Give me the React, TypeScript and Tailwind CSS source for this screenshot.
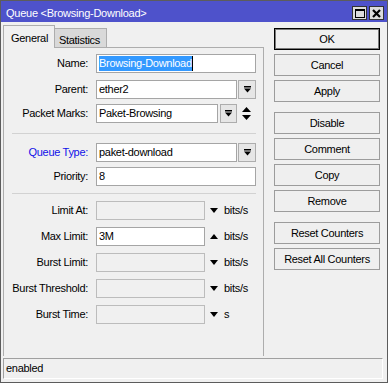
import type { ReactNode } from "react"

function DropIcon() {
  return (
    <svg width="7" height="7" viewBox="0 0 7 7">
      <rect x="0" y="0" width="7" height="1.5" fill="#000" />
      <polygon points="0,2.5 7,2.5 3.5,6.5" fill="#000" />
    </svg>
  )
}

function DropBtn({ className }: { className: string }) {
  return (
    <div className={`flex h-[19px] items-center justify-center border border-[#adadad] bg-[#e6e6e6] ${className}`}>
      <DropIcon />
    </div>
  )
}

function Tri({ up }: { up?: boolean }) {
  return (
    <svg width="8" height="5" viewBox="0 0 8 5" className="ml-[5px]">
      <polygon points={up ? "0,5 8,5 4,0" : "0,0 8,0 4,5"} fill="#000" />
    </svg>
  )
}

function Row({ label, blue, mt, children }: { label: string; blue?: boolean; mt: string; children: ReactNode }) {
  return (
    <div className={`flex h-[19px] items-center ${mt}`}>
      <div className={`w-[84px] text-right ${blue ? "text-[#1010e8]" : "text-black"}`}>{label}</div>
      <div className="ml-[8px] flex h-full items-center">{children}</div>
    </div>
  )
}

function Field({ w, value, off }: { w: string; value?: ReactNode; off?: boolean }) {
  return (
    <div
      className={`flex h-[19px] items-center pl-[2px] ${w} border ${
        off ? "border-[#bcbcbc] bg-[#f0f0f0]" : "border-[#a5a5a5] bg-white"
      }`}
    >
      {value}
    </div>
  )
}

function Limit({ label, mt, value, up, unit = "bits/s" }: { label: string; mt: string; value?: string; up?: boolean; unit?: string }) {
  return (
    <Row label={label} mt={mt}>
      <Field w="w-[109px]" value={value} off={!value} />
      <Tri up={up} />
      <span className="ml-[6px]">{unit}</span>
    </Row>
  )
}

function Btn({ label, mt, primary }: { label: string; mt: string; primary?: boolean }) {
  return (
    <div
      className={`flex h-[22px] w-[106px] items-center justify-center bg-[#efefef] ${mt} ${
        primary ? "border border-black shadow-[inset_0_0_0_1px_#7a7a7a]" : "border border-[#9c9c9c]"
      }`}
    >
      {label}
    </div>
  )
}

export default function App() {
  return (
    <div className="flex h-[383px] w-[388px] flex-col border border-[#5c5c5c] bg-[#f0f0f0] font-['Liberation_Sans',Arial,sans-serif] text-[11px] tracking-[-0.3px] text-black">
      {/* title bar */}
      <div className="flex h-[21px] shrink-0 items-start bg-[#4e52cb] pr-[3px]">
        <span className="pl-[5px] pt-[4px] text-white tracking-[-0.25px]">Queue &lt;Browsing-Download&gt;</span>
        <div className="ml-auto mt-[5px] flex gap-[2px]">
          <div className="flex h-[14px] w-[15px] items-center justify-center border border-[#333] bg-[#dcdcdc]">
            <div className="h-[9px] w-[10px] border border-t-2 border-black" />
          </div>
          <div className="flex h-[14px] w-[15px] items-center justify-center border border-[#333] bg-[#dcdcdc]">
            <svg width="9" height="9" viewBox="0 0 9 9">
              <path d="M1 1 L8 8 M8 1 L1 8" stroke="#000" strokeWidth="2.2" />
            </svg>
          </div>
        </div>
      </div>

      <div className="flex h-[334px] shrink-0">
        {/* left: tabs + form */}
        <div className="ml-[2px] flex w-[261px] flex-col">
          <div className="mt-[3px] flex h-[22px] items-end">
            <div className="relative z-10 -mb-px flex h-[23px] w-[52px] items-start border-x border-t border-[#adadad] bg-[#f0f0f0] pl-[7px] pt-[4px]">
              General
            </div>
            <div className="flex h-[19px] w-[52px] items-start border-r border-t border-[#adadad] bg-[#d9d9d9] pl-[4px] pt-[3px]">
              Statistics
            </div>
          </div>
          <div className="flex flex-1 flex-col border-x border-t border-[#adadad]">
            <Row label="Name:" mt="mt-[6px]">
              <Field
                w="w-[160px]"
                value={
                  <span className="flex items-center">
                    <span className="bg-[#3399ff] leading-[15px] text-white">Browsing-Download</span>
                    <span className="h-[15px] w-px bg-black" />
                  </span>
                }
              />
            </Row>
            <Row label="Parent:" mt="mt-[7px]">
              <Field w="w-[141px]" value="ether2" />
              <DropBtn className="ml-[1px] w-[18px]" />
            </Row>
            <Row label="Packet Marks:" mt="mt-[5px]">
              <Field w="w-[122px]" value="Paket-Browsing" />
              <DropBtn className="ml-[2px] w-[17px]" />
              <svg width="9" height="13" viewBox="0 0 9 13" className="ml-[5px]">
                <polygon points="0,5 9,5 4.5,0" fill="#000" />
                <polygon points="0,8 9,8 4.5,13" fill="#000" />
              </svg>
            </Row>

            <div className="ml-[8px] mt-[10px] h-px w-[244px] bg-[#d2d2d2]" />

            <Row label="Queue Type:" blue mt="mt-[9px]">
              <Field w="w-[141px]" value="paket-download" />
              <DropBtn className="ml-[1px] w-[18px]" />
            </Row>
            <Row label="Priority:" mt="mt-[5px]">
              <Field w="w-[160px]" value="8" />
            </Row>

            <div className="ml-[8px] mt-[7px] h-px w-[244px] bg-[#d2d2d2]" />

            <Limit label="Limit At:" mt="mt-[7px]" />
            <Limit label="Max Limit:" mt="mt-[7px]" value="3M" up />
            <Limit label="Burst Limit:" mt="mt-[7px]" />
            <Limit label="Burst Threshold:" mt="mt-[7px]" />
            <Limit label="Burst Time:" mt="mt-[7px]" unit="s" />
          </div>
        </div>

        {/* right: buttons */}
        <div className="ml-[10px] flex flex-col">
          <Btn label="OK" primary mt="mt-[6px]" />
          <Btn label="Cancel" mt="mt-[4px]" />
          <Btn label="Apply" mt="mt-[4px]" />
          <Btn label="Disable" mt="mt-[10px]" />
          <Btn label="Comment" mt="mt-[4px]" />
          <Btn label="Copy" mt="mt-[4px]" />
          <Btn label="Remove" mt="mt-[4px]" />
          <Btn label="Reset Counters" mt="mt-[10px]" />
          <Btn label="Reset All Counters" mt="mt-[4px]" />
        </div>
      </div>

      {/* status bar */}
      <div className="ml-[2px] mr-[4px] mt-[2px] flex h-[21px] shrink-0 items-center border border-b-white border-l-[#a0a0a0] border-r-white border-t-[#a0a0a0] pl-[2px]">
        enabled
      </div>
    </div>
  )
}
